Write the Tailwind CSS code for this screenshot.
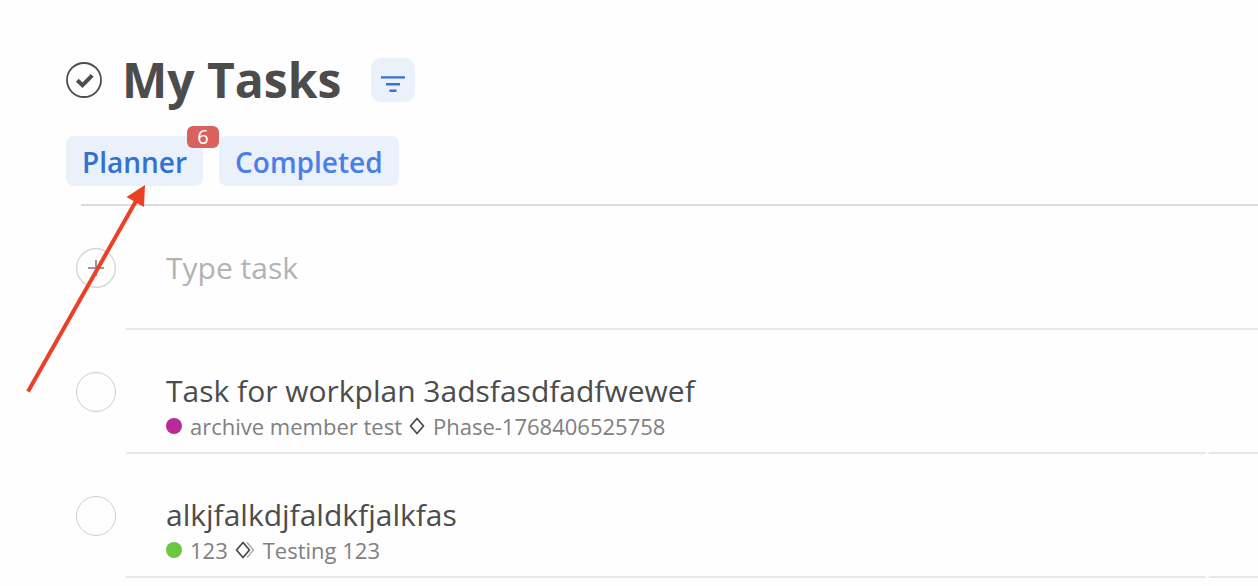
<!DOCTYPE html>
<html lang="en">
  <head>
    <meta charset="UTF-8" />
    <meta name="viewport" content="width=device-width, initial-scale=1" />
    <title>My Tasks</title>
    <script src="https://cdn.jsdelivr.net/npm/@tailwindcss/browser@4"></script>
  </head>
  <body
    class="relative overflow-x-hidden bg-[#fefefe] font-['Open_Sans',sans-serif] text-[#4c4c4c]"
  >
    <header class="pt-12 pl-[66px]">
      <div class="flex h-16 items-center">
        <svg class="size-9 shrink-0" viewBox="0 0 36 36" fill="none" stroke="#4d4d4d">
          <circle cx="18" cy="18" r="17" stroke-width="1.8" />
          <path d="M11.300 18.300l5.200 5 9.700-10" stroke-width="4" />
        </svg>
        <h1 class="ml-5 text-5xl font-bold">My Tasks</h1>
        <button
          type="button"
          aria-label="Filter"
          class="ml-[30px] flex size-11 items-center justify-center rounded-[10px] bg-[#eaf1fb]"
        >
          <svg class="size-11" viewBox="0 0 44 44" stroke="#3273d8" stroke-width="2.4">
            <path d="M10 19.400h24M15 26.300h14M18.500 32.800h7" />
          </svg>
        </button>
      </div>
      <nav class="mt-6 flex gap-4 text-[28px] leading-[48px]">
        <button
          type="button"
          class="relative rounded-lg bg-[#eaf1fb] px-4 pt-[2px] font-semibold text-[#3472d2]"
        >
          Planner
          <span
            class="absolute -top-[10px] -right-4 w-8 rounded-md bg-[#d9625f] text-center text-xl leading-[22px] font-medium text-white"
            >6</span
          >
        </button>
        <button
          type="button"
          class="rounded-lg bg-[#eaf1fb] px-4 pt-[2px] font-semibold text-[#4a7ee8]"
        >
          Completed
        </button>
      </nav>
    </header>

    <main class="mt-[18px]">
      <div class="ml-[81px] h-[2px] bg-[#dbdbdb]"></div>

      <!-- New task -->
      <form class="flex h-[124px] pl-[76px]">
        <button
          type="button"
          aria-label="Add task"
          class="mt-[42px] size-10 shrink-0"
        >
          <svg class="size-10" viewBox="0 0 40 40" fill="none" stroke-width="2">
            <circle cx="20" cy="20" r="19.300" stroke="#d6d6d6" stroke-width="1.4" />
            <path d="M12 20h16M20 12v16" stroke="#999" />
          </svg>
        </button>
        <div class="ml-[10px] flex-1 border-b-2 border-[#e8e8e8] pt-10 pl-10">
          <input
            type="text"
            aria-label="Type task"
            placeholder="Type task"
            class="block h-[42px] w-full text-[30px] outline-none placeholder:text-[#b3b3b3]"
          />
        </div>
      </form>

      <ul>
        <li class="relative flex h-[124px] pl-[76px]">
          <input
            type="checkbox"
            aria-label="Task for workplan 3adsfasdfadfwewef"
            class="mt-[42px] size-10 shrink-0 appearance-none rounded-full border border-[#d0d0d0]"
          />
          <div class="ml-[10px] flex-1 border-b-2 border-[#e8e8e8] pt-10 pl-10">
            <h2 class="text-[30px] leading-[42px]">Task for workplan 3adsfasdfadfwewef</h2>
            <p class="flex items-center text-[22px] leading-7 text-[#808080]">
              <span class="mr-2 size-4 rounded-full bg-[#b82c98]"></span>
              archive member test
              <svg class="mr-2 ml-[7px] h-[18px] w-4" viewBox="0 0 16 18" fill="none" stroke="#4c4c4c" stroke-width="1.8" stroke-linejoin="round">
                <path d="M8 1.500L14.500 9 8 16.500 1.500 9z" />
              </svg>
              Phase-1768406525758
            </p>
          </div>
          <svg class="absolute right-12 bottom-0 h-[2px] w-1" viewBox="0 0 4 2">
            <path d="M0 0h4L1 2H0z" fill="#fefefe" />
          </svg>
        </li>
        <li class="relative flex h-[124px] pl-[76px]">
          <input
            type="checkbox"
            aria-label="alkjfalkdjfaldkfjalkfas"
            class="mt-[42px] size-10 shrink-0 appearance-none rounded-full border border-[#d0d0d0]"
          />
          <div class="ml-[10px] flex-1 border-b-2 border-[#e8e8e8] pt-10 pl-10">
            <h2 class="text-[30px] leading-[42px]">alkjfalkdjfaldkfjalkfas</h2>
            <p class="flex items-center text-[22px] leading-7 text-[#808080]">
              <span class="mr-2 size-4 rounded-full bg-[#69c83e]"></span>
              123
              <svg class="mr-2 ml-[7px] h-[18px] w-5" viewBox="0 0 20 18" fill="none" stroke-width="1.8" stroke-linejoin="round">
                <path d="M12 1.500L18.500 9 12 16.500" stroke="#aaa" stroke-width="1.4" />
                <path d="M8 1.500L14.500 9 8 16.500 1.500 9z" stroke="#4c4c4c" />
              </svg>
              Testing 123
            </p>
          </div>
          <svg class="absolute right-12 bottom-0 h-[2px] w-1" viewBox="0 0 4 2">
            <path d="M0 0h4L1 2H0z" fill="#fefefe" />
          </svg>
        </li>
      </ul>
    </main>

    <!-- Arrow pointing at the Planner tab -->
    <svg
      class="pointer-events-none absolute top-[180px] left-5 h-[220px] w-[140px]"
      viewBox="20 180 140 220"
    >
      <path d="M28 391.500L136 201" stroke="#eb4026" stroke-width="4" />
      <path d="M145 185L126.500 197 144 207z" fill="#eb4026" />
    </svg>
  </body>
</html>
